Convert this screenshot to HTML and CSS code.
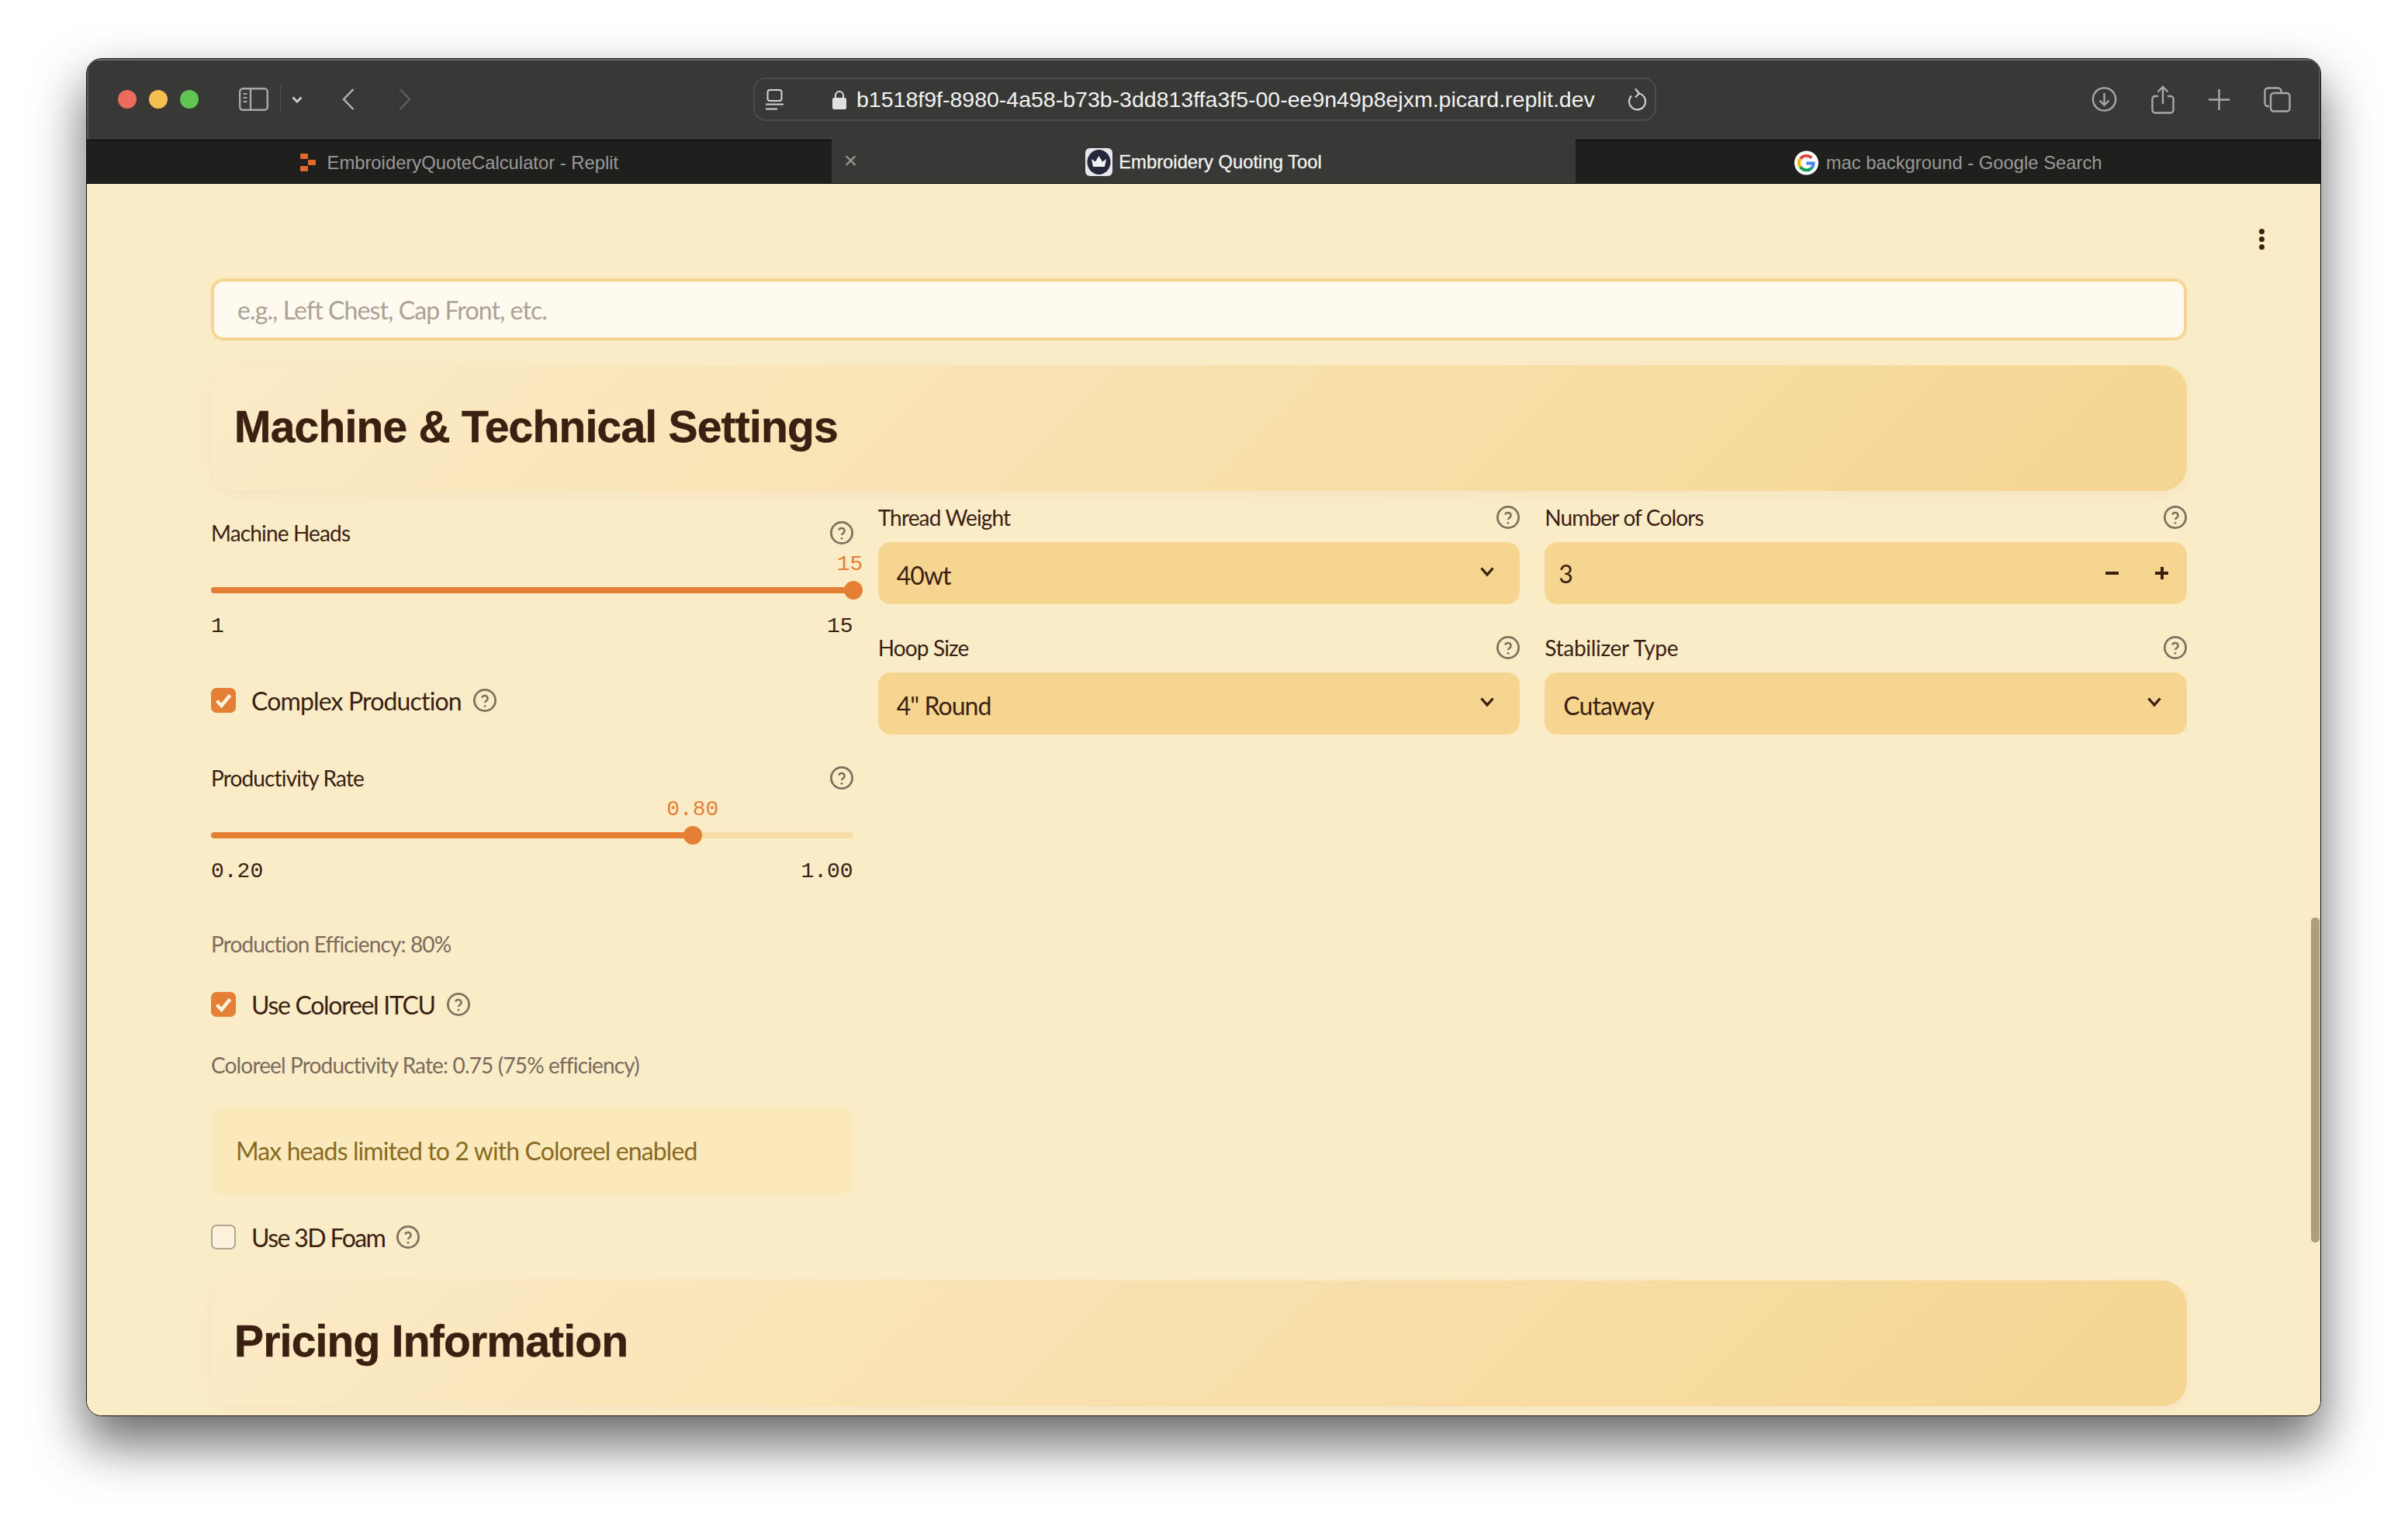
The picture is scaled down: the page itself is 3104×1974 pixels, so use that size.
FILE: index.html
```html
<!DOCTYPE html>
<html lang="en">
<head>
    <meta charset="UTF-8">
    <title>Embroidery Quoting Tool</title>
    <link rel="stylesheet" href="styles.css">
</head>
<body>
    <svg class="sprites" width="0" height="0">
        <symbol id="help" viewBox="0 0 24 24">
            <circle cx="12" cy="12" r="10.900" fill="none" stroke="currentColor" stroke-width="2.200"/>
            <path d="M8.900 9.200a3.100 3.100 0 0 1 6 1c0 2-2.900 2.600-2.900 4.200" fill="none" stroke="currentColor" stroke-width="2"/>
            <circle cx="12" cy="17.800" r="1.100" fill="currentColor"/>
        </symbol>
        <symbol id="chevron" viewBox="0 0 20 14">
            <path d="M2.500 2.500 10 11l7.500-8.500" fill="none" stroke="currentColor" stroke-width="3.400"/>
        </symbol>
        <symbol id="tick" viewBox="0 0 32 32">
            <path d="M7.500 16.500 13.500 23 24.500 9.500" fill="none" stroke="#fdf3e3" stroke-width="4.400"/>
        </symbol>
    </svg>

    <div class="window">
        <header class="toolbar">
            <span class="light red"></span>
            <span class="light yellow"></span>
            <span class="light green"></span>

            <svg class="tool-sidebar" width="38" height="30" viewBox="0 0 38 30" fill="none" stroke="#a8a8a6" stroke-width="2.400">
                <rect x="1.200" y="1.200" width="35.600" height="27.600" rx="4"/>
                <path d="M15 1.200v27.600"/>
                <path d="M5.500 8h5M5.500 13h5M5.500 18h5" stroke-width="2"/>
            </svg>
            <span class="tool-divider"></span>
            <svg class="tool-more" width="14" height="9" viewBox="0 0 14 9" fill="none" stroke="#d0d0ce" stroke-width="2.600">
                <path d="M1.500 1.500 7 7.200l5.500-5.700"/>
            </svg>
            <svg class="tool-back" width="16" height="28" viewBox="0 0 16 28" fill="none" stroke="#b4b4b2" stroke-width="2.400">
                <path d="M14.500 1 2 14l12.500 13"/>
            </svg>
            <svg class="tool-forward" width="16" height="28" viewBox="0 0 16 28" fill="none" stroke="#5e5e5c" stroke-width="2.400">
                <path d="M1.500 1 14 14 1.500 27"/>
            </svg>

            <div class="urlbar">
                <svg class="url-reader" width="23" height="27" viewBox="0 0 23 27" fill="none" stroke="#d4d4d2" stroke-width="2">
                    <rect x="2.500" y="1" width="18" height="14" rx="3"/>
                    <path d="M0 19.500h23M0 25.500h15"/>
                </svg>
                <svg class="url-lock" width="18" height="25" viewBox="0 0 18 25">
                    <path d="M4 11V7a5 5 0 0 1 10 0v4" fill="none" stroke="#e0e0de" stroke-width="2"/>
                    <rect y="10" width="18" height="15" rx="2.500" fill="#e0e0de"/>
                </svg>
                <span class="url-text">b1518f9f-8980-4a58-b73b-3dd813ffa3f5-00-ee9n49p8ejxm.picard.replit.dev</span>
                <svg class="url-reload" width="25" height="30" viewBox="0 0 25 30" fill="none" stroke="#d0d0ce" stroke-width="2.200">
                    <path d="M15.500 7.500A10.500 10.500 0 1 1 6 10.500"/>
                    <path d="M11 1.500l5 6-5 5"/>
                </svg>
            </div>

            <div class="tool-actions">
                <svg width="33" height="32" viewBox="0 0 33 32" fill="none" stroke="#a8a8a6" stroke-width="2.400">
                    <circle cx="16.500" cy="16" r="14.600"/>
                    <path d="M16.500 8v15M10.500 17.500l6 6 6-6"/>
                </svg>
                <svg width="30" height="37" viewBox="0 0 30 37" fill="none" stroke="#a8a8a6" stroke-width="2.400">
                    <path d="M9 14H5a3.500 3.500 0 0 0-3.500 3.500V32A3.500 3.500 0 0 0 5 35.500h20a3.500 3.500 0 0 0 3.500-3.500V17.500A3.500 3.500 0 0 0 25 14h-4"/>
                    <path d="M15 24V2M8.500 8.500 15 2l6.500 6.500"/>
                </svg>
                <svg width="27" height="27" viewBox="0 0 27 27" fill="none" stroke="#a8a8a6" stroke-width="2.400">
                    <path d="M13.500 0v27M0 13.500h27"/>
                </svg>
                <svg width="35" height="33" viewBox="0 0 35 33" fill="none" stroke="#a8a8a6" stroke-width="2.400">
                    <path d="M7 25H5.500a4 4 0 0 1-4-4V5.500a4 4 0 0 1 4-4h13a4 4 0 0 1 4 4V7"/>
                    <rect x="9" y="8" width="24.500" height="23.500" rx="4"/>
                </svg>
            </div>
        </header>

        <nav class="tabs">
            <div class="tab">
                <svg class="fav-replit" width="20" height="23" viewBox="0 0 20 23" fill="#e2672b">
                    <rect width="10" height="7" rx="1"/>
                    <rect x="10" y="8" width="10" height="7" rx="1"/>
                    <rect y="16" width="10" height="7" rx="1"/>
                </svg>
                <span>EmbroideryQuoteCalculator - Replit</span>
            </div>
            <div class="tab tab-active">
                <span class="tab-close">×</span>
                <svg width="35" height="36" viewBox="0 0 35 36">
                    <rect width="35" height="36" rx="6" fill="#e8e8ec"/>
                    <ellipse cx="17.500" cy="18" rx="15" ry="16" fill="#25283a"/>
                    <path d="M8 14l5 3.500L17.500 10l4.500 7.500L27 14l-2 10H10z" fill="#f2f2f2"/>
                </svg>
                <span>Embroidery Quoting Tool</span>
            </div>
            <div class="tab tab-search">
                <svg width="31" height="32" viewBox="0 0 32 32">
                    <circle cx="16" cy="16" r="16" fill="#fff"/>
                    <g fill="none" stroke-width="4">
                        <path d="M23 9.500A10 10 0 0 0 8 10.500" stroke="#db4437"/>
                        <path d="M8 10.500a10 10 0 0 0 0 11" stroke="#f4b400"/>
                        <path d="M8 21.500a10 10 0 0 0 15 1.500" stroke="#0f9d58"/>
                        <path d="M16 16.500h9.500a10 10 0 0 1-2.500 6.500" stroke="#4285f4"/>
                    </g>
                </svg>
                <span>mac background - Google Search</span>
            </div>
        </nav>

        <main class="page">
            <button class="kebab" type="button" aria-label="Menu"><i></i><i></i><i></i></button>

            <input class="location-input" type="text" placeholder="e.g., Left Chest, Cap Front, etc.">

            <section class="section-head">
                <h2>Machine &amp; Technical Settings</h2>
            </section>

            <div class="columns">
                <div class="col col-first">
                    <div class="field-label">
                        <span>Machine Heads</span>
                        <svg class="help"><use href="#help"/></svg>
                    </div>
                    <div class="slider">
                        <span class="slider-value" style="left: 99.5%">15</span>
                        <div class="slider-track"><div class="slider-fill" style="width: 100%"></div></div>
                        <div class="slider-range"><span>1</span><span>15</span></div>
                    </div>

                    <label class="check check-complex">
                        <span class="box box-on"><svg><use href="#tick"/></svg></span>
                        <span>Complex Production</span>
                        <svg class="help"><use href="#help"/></svg>
                    </label>

                    <div class="field-label label-rate">
                        <span>Productivity Rate</span>
                        <svg class="help"><use href="#help"/></svg>
                    </div>
                    <div class="slider">
                        <span class="slider-value" style="left: 75%">0.80</span>
                        <div class="slider-track"><div class="slider-fill" style="width: 75%"></div></div>
                        <div class="slider-range"><span>0.20</span><span>1.00</span></div>
                    </div>

                    <p class="note note-efficiency">Production Efficiency: 80%</p>

                    <label class="check check-coloreel">
                        <span class="box box-on"><svg><use href="#tick"/></svg></span>
                        <span>Use Coloreel ITCU</span>
                        <svg class="help"><use href="#help"/></svg>
                    </label>

                    <p class="note note-coloreel">Coloreel Productivity Rate: 0.75 (75% efficiency)</p>

                    <div class="warning">Max heads limited to 2 with Coloreel enabled</div>

                    <label class="check check-foam">
                        <span class="box"></span>
                        <span>Use 3D Foam</span>
                        <svg class="help"><use href="#help"/></svg>
                    </label>
                </div>

                <div class="col">
                    <div class="field-label">
                        <span>Thread Weight</span>
                        <svg class="help"><use href="#help"/></svg>
                    </div>
                    <div class="select">
                        <span>40wt</span>
                        <svg class="select-arrow"><use href="#chevron"/></svg>
                    </div>
                    <div class="field-label label-next">
                        <span>Hoop Size</span>
                        <svg class="help"><use href="#help"/></svg>
                    </div>
                    <div class="select">
                        <span>4" Round</span>
                        <svg class="select-arrow"><use href="#chevron"/></svg>
                    </div>
                </div>

                <div class="col">
                    <div class="field-label">
                        <span>Number of Colors</span>
                        <svg class="help"><use href="#help"/></svg>
                    </div>
                    <div class="select stepper">
                        <span>3</span>
                        <div class="step-buttons">
                            <i class="step-minus"></i>
                            <i class="step-plus"></i>
                        </div>
                    </div>
                    <div class="field-label label-next">
                        <span class="label-wide">Stabilizer Type</span>
                        <svg class="help"><use href="#help"/></svg>
                    </div>
                    <div class="select">
                        <span>Cutaway</span>
                        <svg class="select-arrow"><use href="#chevron"/></svg>
                    </div>
                </div>
            </div>

            <section class="section-head section-pricing">
                <h2>Pricing Information</h2>
            </section>

            <div class="scroll-thumb"></div>
        </main>
    </div>
</body>
</html>
```

FILE: styles.css
```css
* {
    box-sizing: border-box;
}

html, body {
    height: 100%;
}

body {
    margin: 0;
    padding: 75px 0 0 111px;
    background: #fff;
    overflow: hidden;
    font-family: "Lato", "Noto Sans", sans-serif;
    color: #3b2012;
}

.sprites {
    position: absolute;
}

/* browser window */
.window {
    width: 2881px;
    height: 1751px;
    border-radius: 20px;
    border: 1px solid #111;
    overflow: hidden;
    display: flex;
    flex-direction: column;
    box-shadow: 0 34px 66px 2px rgba(0, 0, 0, 0.58);
    background: #fbecc8;
}

.toolbar {
    height: 104px;
    flex: none;
    display: flex;
    align-items: center;
    padding: 0 38px 0 40px;
    background: #383837;
    box-shadow: inset 0 2px 0 #6a6a68, inset 2px 0 0 #555553, inset -2px 0 0 #555553;
}

.light {
    width: 24px;
    height: 24px;
    border-radius: 50%;
    margin-right: 16px;
    flex: none;
}

.red { background: #ec6a5e; }
.yellow { background: #f4bf4f; }
.green { background: #61c554; margin-right: 0; }

.toolbar svg {
    flex: none;
}

.tool-sidebar {
    margin-left: 52px;
}

.tool-divider {
    width: 1px;
    height: 36px;
    margin-left: 15px;
    background: #555553;
}

.tool-more {
    margin-left: 14px;
}

.tool-back {
    margin-left: 51px;
}

.tool-forward {
    margin-left: 57px;
}

.urlbar {
    width: 1164px;
    height: 56px;
    margin-left: 441px;
    display: flex;
    align-items: center;
    padding: 0 11px 0 14px;
    border: 2px solid #4c4c4a;
    border-radius: 16px;
}

.url-lock {
    margin-left: 63px;
}

.url-text {
    margin-left: 13px;
    font-family: "Liberation Sans", Arial, sans-serif;
    font-size: 28.500px;
    color: #f2f2f0;
    white-space: nowrap;
}

.url-reload {
    margin-left: auto;
}

.tool-actions {
    margin-left: auto;
    display: flex;
    align-items: center;
    gap: 44px;
}

/* tab strip */
.tabs {
    height: 57px;
    flex: none;
    display: grid;
    grid-template-columns: repeat(3, 1fr);
    background: #1f1f1e;
    border-top: 1px solid #000;
    border-bottom: 1px solid #000;
}

.tab {
    position: relative;
    display: flex;
    align-items: center;
    justify-content: center;
    gap: 15px;
    padding-top: 2px;
    font-family: "Liberation Sans", Arial, sans-serif;
    font-size: 23.800px;
    color: #999997;
}

.tab-search {
    gap: 10px;
}

.tab-active {
    gap: 8px;
    margin-top: -1px;
    background: #383837;
    color: #f4f4f2;
    -webkit-text-stroke: 0.3px #f4f4f2;
}

.tab-close {
    position: absolute;
    left: 16px;
    top: 12px;
    font-size: 30px;
    line-height: 30px;
    color: #9a9a98;
    -webkit-text-stroke: 0;
}

/* streamlit page */
.page {
    position: relative;
    flex: 1;
    min-height: 0;
    overflow: hidden;
    padding: 122px 172px 0 160px;
    background: #fbecc8;
}

.kebab {
    position: absolute;
    top: 58px;
    right: 72px;
    width: 7px;
    padding: 0;
    border: 0;
    background: none;
    display: flex;
    flex-direction: column;
    gap: 3px;
}

.kebab i {
    width: 7px;
    height: 7px;
    border-radius: 50%;
    background: #3b2012;
}

.location-input {
    display: block;
    width: 100%;
    height: 80px;
    padding: 0 30px;
    border: 4px solid #f6d590;
    border-radius: 16px;
    background: #fffaf0;
    font-family: inherit;
    font-size: 32px;
    letter-spacing: -0.900px;
    outline: none;
}

.location-input::placeholder {
    color: #ada095;
    opacity: 1;
}

.section-head {
    height: 162px;
    margin-top: 32px;
    padding: 0 30px 5px;
    display: flex;
    align-items: center;
    border-radius: 32px;
    background: linear-gradient(135deg, #fbebc8 0%, #f5d591 100%);
    box-shadow: 0 4px 14px rgba(120, 80, 20, 0.05);
}

.section-head h2 {
    margin: 0;
    font-family: "Liberation Sans", Arial, sans-serif;
    font-size: 57px;
    font-weight: 700;
    letter-spacing: -0.800px;
    -webkit-text-stroke: 0.5px #3b2012;
    color: #3b2012;
}

.section-pricing {
    margin-top: 0;
    padding-bottom: 7px;
}

.columns {
    display: grid;
    grid-template-columns: repeat(3, 1fr);
    gap: 32px;
    margin-top: 14px;
    height: 1004px;
}

.col-first {
    padding-top: 20px;
}

.field-label {
    display: flex;
    justify-content: space-between;
    align-items: center;
    height: 40px;
    font-size: 28px;
    letter-spacing: -0.850px;
}

.label-wide {
    letter-spacing: -0.300px;
}

.label-next {
    margin-top: 36px;
}

.label-rate {
    margin-top: 60px;
}

.help {
    width: 30px;
    height: 30px;
    flex: none;
    color: #80705f;
}

/* sliders */
.slider {
    position: relative;
    padding-top: 50px;
}

.slider-value {
    position: absolute;
    top: 1px;
    transform: translateX(-50%);
    font-family: "Liberation Mono", monospace;
    font-size: 28px;
    line-height: 40px;
    letter-spacing: 0;
    color: #e57f35;
}

.slider-track {
    height: 8px;
    border-radius: 4px;
    background: #f8dea6;
}

.slider-fill {
    position: relative;
    height: 8px;
    border-radius: 4px;
    background: #e57f35;
}

.slider-fill::after {
    content: "";
    position: absolute;
    right: -12px;
    top: -8px;
    width: 24px;
    height: 24px;
    border-radius: 50%;
    background: #e57f35;
}

.slider-range {
    display: flex;
    justify-content: space-between;
    margin-top: 23px;
    font-family: "Liberation Mono", monospace;
    font-size: 28px;
    line-height: 40px;
}

/* checkboxes */
.check {
    display: flex;
    align-items: center;
    height: 40px;
    font-size: 32px;
    letter-spacing: -0.950px;
}

.check .help {
    margin-left: 15px;
}

.check-complex {
    margin-top: 55px;
    letter-spacing: -0.850px;
}

.check-coloreel {
    margin-top: 38px;
    letter-spacing: -1.300px;
}

.check-foam {
    margin-top: 35px;
    letter-spacing: -1.600px;
}

.box {
    width: 32px;
    height: 32px;
    flex: none;
    margin-right: 20px;
    border-radius: 7px;
    border: 2px solid #b3a596;
    background: #fcf1da;
}

.box-on {
    border: 0;
    background: #e57f35;
}

.box svg {
    display: block;
    width: 32px;
    height: 32px;
}

.note {
    margin: 0;
    font-size: 28px;
    line-height: 40px;
    letter-spacing: -0.850px;
    color: #7c6a5c;
}

.note-efficiency {
    margin-top: 53px;
}

.note-coloreel {
    margin-top: 38px;
}

.warning {
    height: 112px;
    margin-top: 35px;
    padding: 0 32px 2px;
    display: flex;
    align-items: center;
    border-radius: 16px;
    background: #fbe9bc;
    font-size: 32px;
    letter-spacing: -0.900px;
    color: #8a6a20;
}

/* selects */
.select {
    height: 80px;
    margin-top: 12px;
    padding: 4px 24px 0;
    display: flex;
    align-items: center;
    justify-content: space-between;
    border-radius: 16px;
    background: #f6d590;
    font-size: 32px;
    letter-spacing: -0.950px;
}

.select-arrow {
    width: 20px;
    height: 14px;
    margin-top: -8px;
    margin-right: 8px;
    color: #3b2012;
}

.stepper {
    padding: 0 24px 0 18px;
}

.step-buttons {
    display: flex;
    align-items: center;
    gap: 47px;
}

.step-minus {
    display: block;
    width: 17px;
    height: 4px;
    background: #3b2012;
}

.step-plus {
    display: block;
    width: 17px;
    height: 16px;
    background:
        linear-gradient(#3b2012, #3b2012) center / 17px 4px no-repeat,
        linear-gradient(#3b2012, #3b2012) center / 4px 16px no-repeat;
}

.scroll-thumb {
    position: absolute;
    top: 946px;
    right: 1px;
    width: 11px;
    height: 419px;
    border-radius: 5px;
    background: #b09c7f;
}
```
